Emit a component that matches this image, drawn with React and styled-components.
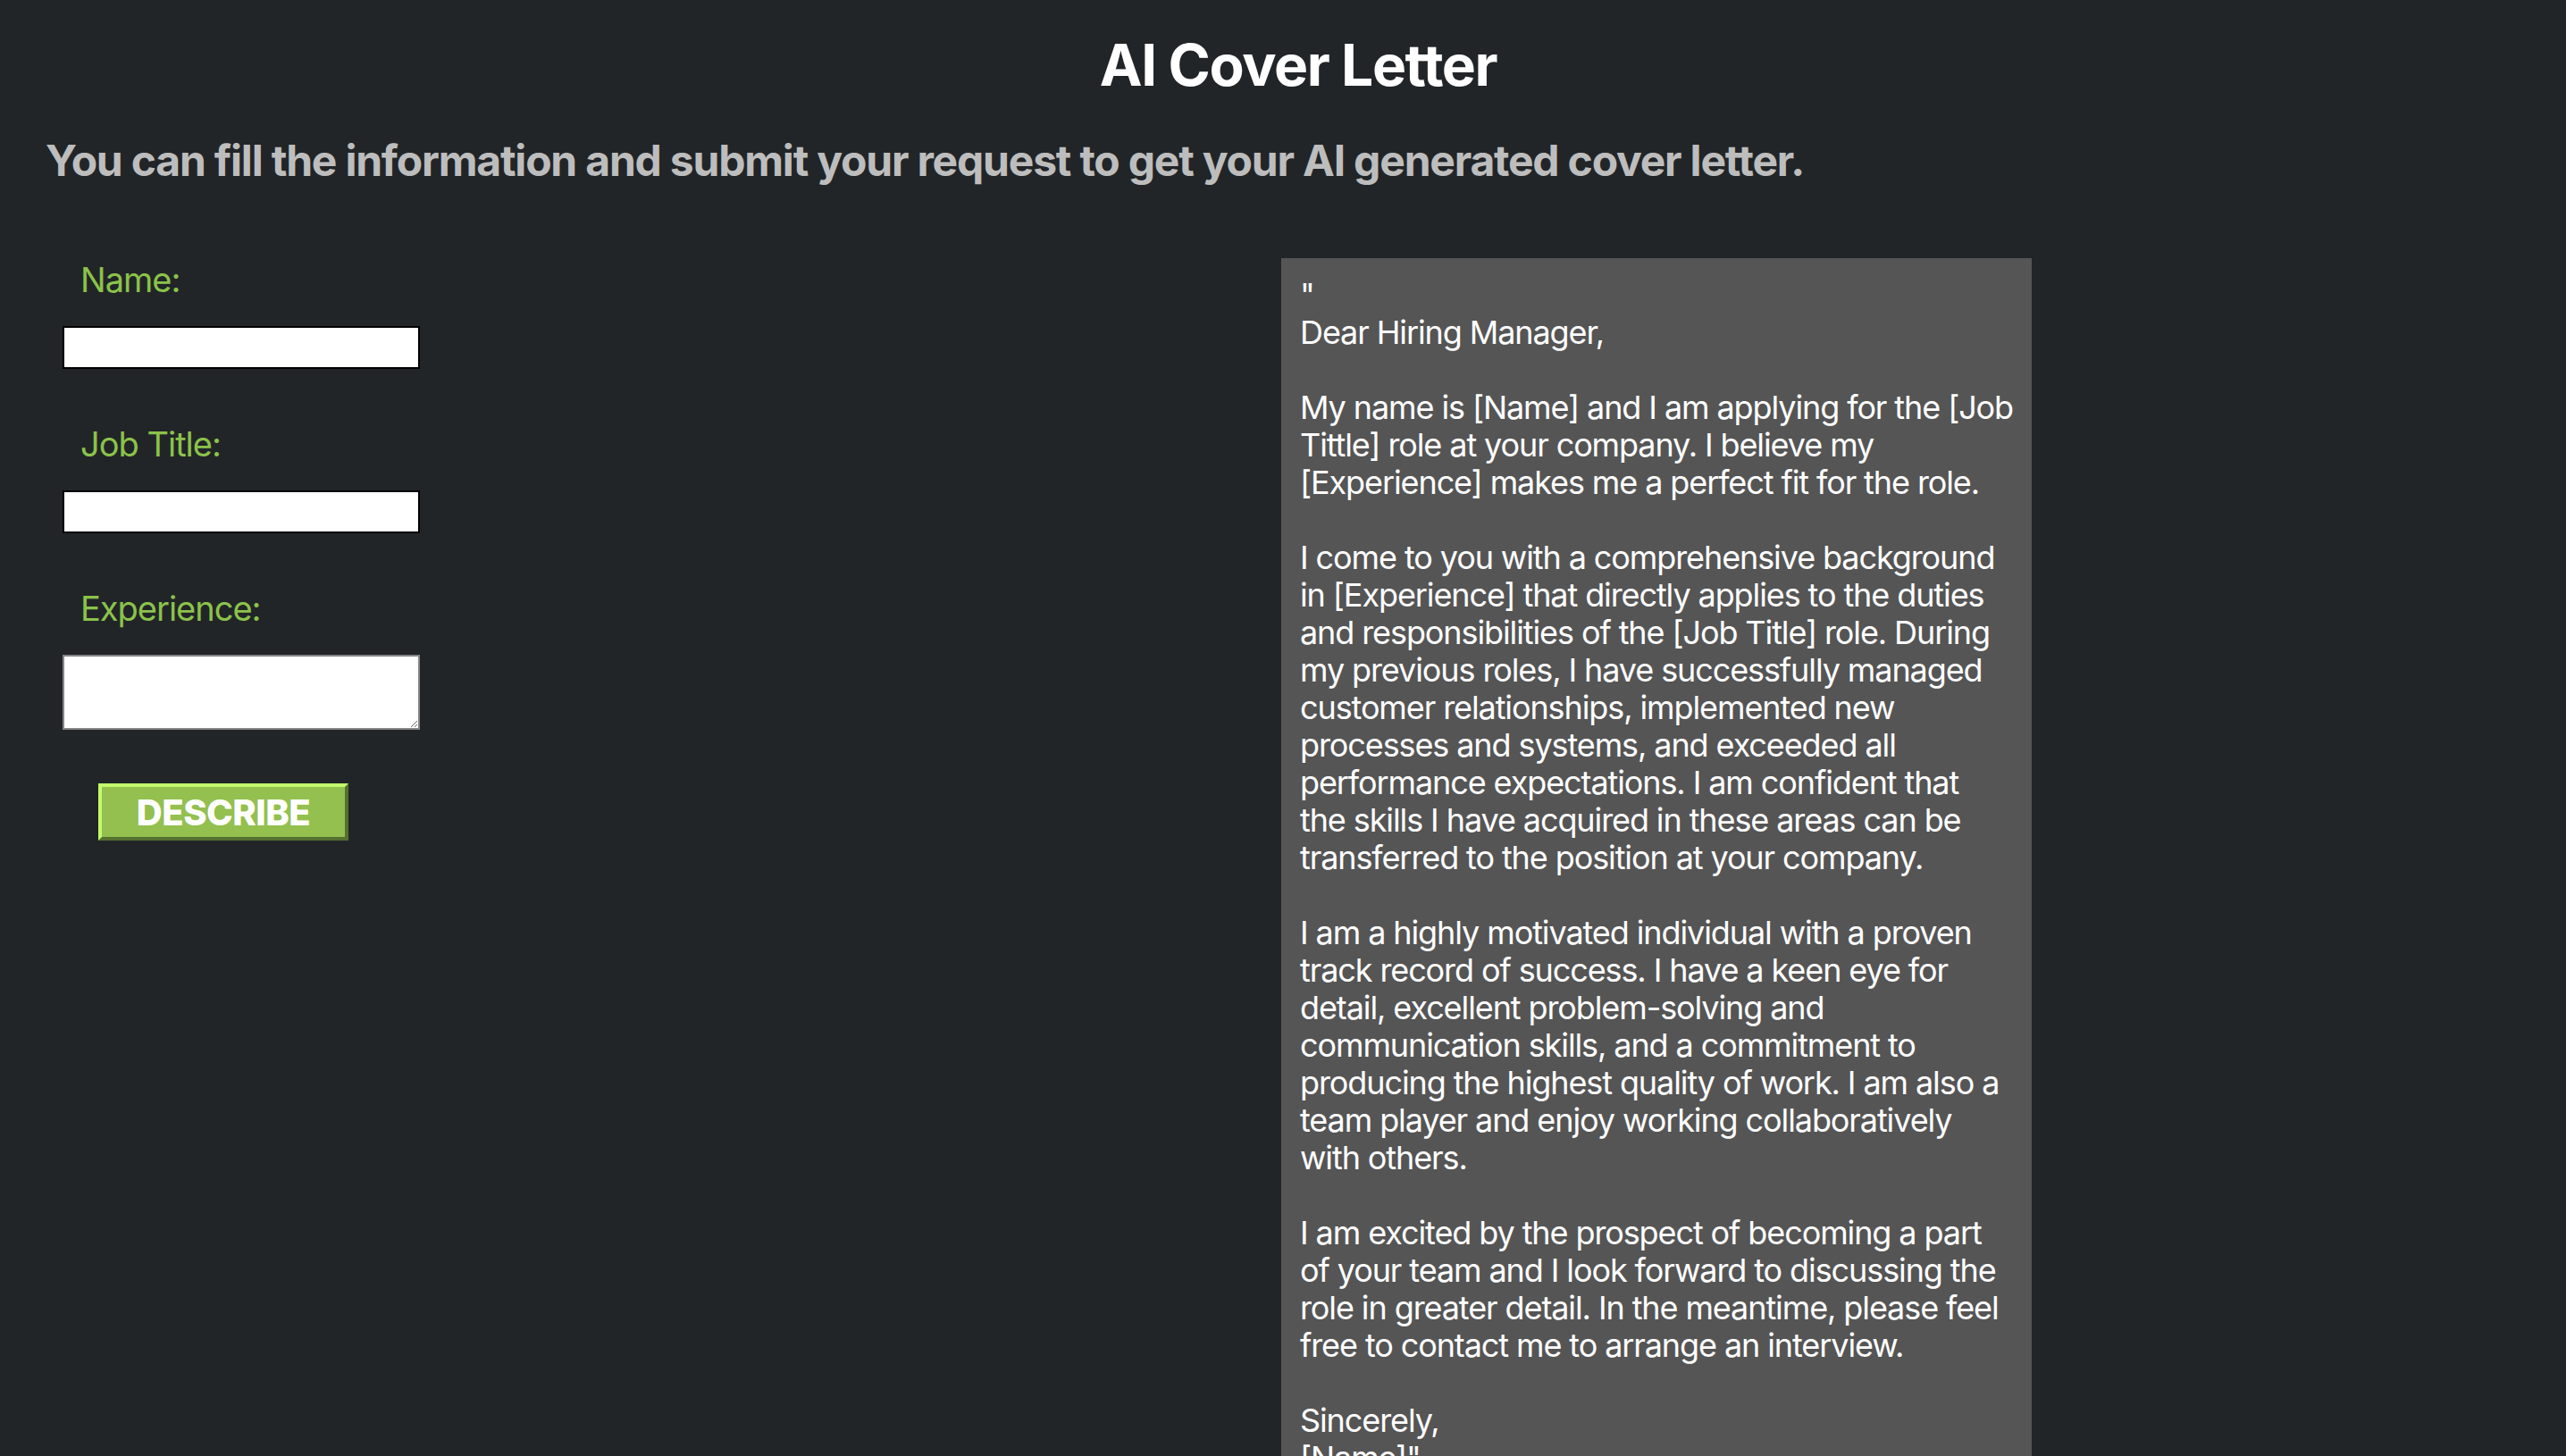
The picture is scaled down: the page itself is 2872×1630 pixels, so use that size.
import React from "react";
import styled, { createGlobalStyle } from "styled-components";

const letter = `"
Dear Hiring Manager,

My name is [Name] and I am applying for the [Job
Tittle] role at your company. I believe my
[Experience] makes me a perfect fit for the role.

I come to you with a comprehensive background
in [Experience] that directly applies to the duties
and responsibilities of the [Job Title] role. During
my previous roles, I have successfully managed
customer relationships, implemented new
processes and systems, and exceeded all
performance expectations. I am confident that
the skills I have acquired in these areas can be
transferred to the position at your company.

I am a highly motivated individual with a proven
track record of success. I have a keen eye for
detail, excellent problem-solving and
communication skills, and a commitment to
producing the highest quality of work. I am also a
team player and enjoy working collaboratively
with others.

I am excited by the prospect of becoming a part
of your team and I look forward to discussing the
role in greater detail. In the meantime, please feel
free to contact me to arrange an interview.

Sincerely,
[Name]"`;

const GlobalStyle = createGlobalStyle`
  body {
    margin: 0;
    background-color: #222528;
    font-family: Inter, "Liberation Sans", sans-serif;
  }
`;

const Page = styled.div`
  min-height: 100vh;
  padding-top: 35px;
  box-sizing: border-box;
`;

const Title = styled.h1`
  margin: 0;
  padding-left: 34px;
  font-size: 64px;
  line-height: 76px;
  font-weight: 700;
  letter-spacing: -1.4px;
  color: #ffffff;
  text-align: center;
`;

const Subtitle = styled.h2`
  margin: 40px 0 0;
  padding-left: 51px;
  font-size: 48px;
  line-height: 58px;
  font-weight: 700;
  letter-spacing: -1.2px;
  color: #bdbdbd;
`;

const Main = styled.div`
  display: flex;
  margin-top: 80px;
`;

const FormColumn = styled.form`
  width: 1434px;
  box-sizing: border-box;
  padding-left: 70px;
  display: flex;
  flex-direction: column;
  align-items: flex-start;
`;

const Field = styled.div`
  display: flex;
  flex-direction: column;
  margin-bottom: 60px;
`;

const Label = styled.label`
  padding-left: 20px;
  margin-bottom: 28px;
  font-size: 38px;
  line-height: 48px;
  letter-spacing: -1px;
  color: #8bc34a;
`;

const TextInput = styled.input`
  width: 400px;
  height: 48px;
  box-sizing: border-box;
  margin: 0;
  border: 2px solid #000000;
  background: #ffffff;
`;

const TextArea = styled.textarea`
  width: 400px;
  height: 84px;
  box-sizing: border-box;
  margin: 0;
  border: 2px solid #858585;
  background: #ffffff;
`;

const DescribeButton = styled.button`
  margin-left: 40px;
  width: 280px;
  height: 64px;
  box-sizing: border-box;
  border: 4px solid;
  border-color: #c2fb6c #55702f #55702f #c2fb6c;
  background: #93c04f;
  color: #ffffff;
  font-family: Inter, "Liberation Sans", sans-serif;
  font-size: 40px;
  font-weight: 800;
  letter-spacing: -0.5px;
  padding: 0;
`;

const LetterPanel = styled.div`
  width: 840px;
  box-sizing: border-box;
  padding: 20px 21px;
  background: #555555;
  color: #ffffff;
  font-size: 36px;
  line-height: 42px;
  letter-spacing: -1.1px;
  white-space: pre;
`;

export default function App() {
  return (
    <>
      <GlobalStyle />
      <Page>
        <Title>AI Cover Letter</Title>
        <Subtitle>
          You can fill the information and submit your request to get your AI
          generated cover letter.
        </Subtitle>
        <Main>
          <FormColumn onSubmit={(e) => e.preventDefault()}>
            <Field>
              <Label htmlFor="name">Name:</Label>
              <TextInput id="name" type="text" />
            </Field>
            <Field>
              <Label htmlFor="job">Job Title:</Label>
              <TextInput id="job" type="text" />
            </Field>
            <Field>
              <Label htmlFor="exp">Experience:</Label>
              <TextArea id="exp" />
            </Field>
            <DescribeButton type="submit">DESCRIBE</DescribeButton>
          </FormColumn>
          <LetterPanel>{letter}</LetterPanel>
        </Main>
      </Page>
    </>
  );
}
